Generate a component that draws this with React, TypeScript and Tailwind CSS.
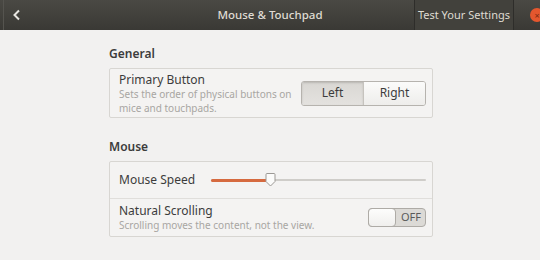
import React from "react";

export default function App() {
  const font = { fontFamily: '"Noto Sans", "Open Sans", sans-serif' };
  return (
    <div className="w-[540px] h-[260px] bg-[#f2f1f0] overflow-hidden flex flex-col" style={font}>
      {/* header */}
      <div className="h-[30px] shrink-0 flex items-center bg-gradient-to-b from-[#4a4944] to-[#3a3935] text-[#dfdbd2]">
        <div className="w-[4px] h-full border-r border-[#55544f]" />
        <div className="w-[26px] h-full flex items-center justify-center">
          <svg width="10" height="12" viewBox="0 0 10 12">
            <path d="M7 1.5 L2.5 6 L7 10.5" stroke="#e8e6e1" strokeWidth="2" fill="none" />
          </svg>
        </div>
        <div className="flex-1 text-center text-[11.5px] font-medium pl-[96px] whitespace-nowrap">Mouse &amp; Touchpad</div>
        <div className="h-full w-[100px] shrink-0 flex items-center justify-center border-l border-r border-[#2e2d2a] text-[11px] bg-[#42413c] whitespace-nowrap">
          Test Your Settings
        </div>
        <div className="w-[26px] h-full flex items-center justify-end">
          <div className="w-[14px] h-[14px] rounded-full bg-[#e4572e] mr-[-4px] flex items-center justify-center text-[9px] text-[#7a2a10] leading-none">
            ×
          </div>
        </div>
      </div>

      {/* content */}
      <div className="pl-[109px] pr-[107px] pt-[16px] text-[#3c3c3c]">
        <div className="text-[12px] font-semibold leading-[16px] mb-[6px]">General</div>
        <div className="border border-[#d8d6d2] rounded-[2px] bg-[#f4f3f2] h-[50px] flex items-center pl-[9px] pr-[6px]">
          <div className="flex-1">
            <div className="text-[12px] leading-[15px] text-[#3c3c3c]">Primary Button</div>
            <div className="text-[10px] leading-[14px] text-[#a8a6a2] w-[180px]">
              Sets the order of physical buttons on mice and touchpads.
            </div>
          </div>
          <div className="flex shrink-0 h-[25px] w-[125px] rounded-[3px] border border-[#b6b3ae] overflow-hidden text-[12px]">
            <div className="w-[62px] flex items-center justify-center bg-gradient-to-b from-[#d9d7d3] to-[#e4e2df] border-r border-[#c6c3be] shadow-[inset_0_1px_2px_rgba(0,0,0,0.15)]">
              Left
            </div>
            <div className="flex-1 flex items-center justify-center bg-gradient-to-b from-[#fbfbfa] to-[#eeedeb]">Right</div>
          </div>
        </div>

        <div className="text-[12px] font-semibold leading-[16px] mt-[21px] mb-[6px]">Mouse</div>
        <div className="border border-[#d8d6d2] rounded-[2px] bg-[#f4f3f2]">
          <div className="h-[37px] flex items-center pl-[9px] pr-[6px] border-b border-[#e0dedb]">
            <div className="w-[92px] text-[12px]">Mouse Speed</div>
            <div className="flex-1 relative h-[14px] flex items-center">
              <div className="w-full h-[2px] bg-[#cfcdc9] rounded" />
              <div className="absolute left-0 h-[3px] w-[60px] bg-[#d66a3f] rounded top-[5.5px]" />
              <div className="absolute left-[54px] top-[0px] w-[11px] h-[14px]">
                <svg width="11" height="14" viewBox="0 0 11 14">
                  <path d="M1 1.5 Q1 0.5 2 0.5 L9 0.5 Q10 0.5 10 1.5 L10 8.5 L5.5 13 L1 8.5 Z" fill="#fbfbfa" stroke="#9c9995" strokeWidth="1" />
                </svg>
              </div>
            </div>
          </div>
          <div className="h-[37px] flex items-center pl-[9px] pr-[6px]">
            <div className="flex-1">
              <div className="text-[12px] leading-[15px]">Natural Scrolling</div>
              <div className="text-[10px] leading-[14px] text-[#a8a6a2]">Scrolling moves the content, not the view.</div>
            </div>
            <div className="w-[58px] h-[19px] shrink-0 rounded-[4px] border border-[#aeaba6] bg-[#dcdad6] relative flex items-center justify-end pr-[4px] text-[11px] text-[#5a5a5a]">
              OFF
              <div className="absolute left-[-1px] top-[-1px] w-[28px] h-[19px] rounded-[4px] border border-[#aeaba6] bg-gradient-to-b from-[#fdfdfc] to-[#f0efed]" />
            </div>
          </div>
        </div>
      </div>
    </div>
  );
}
